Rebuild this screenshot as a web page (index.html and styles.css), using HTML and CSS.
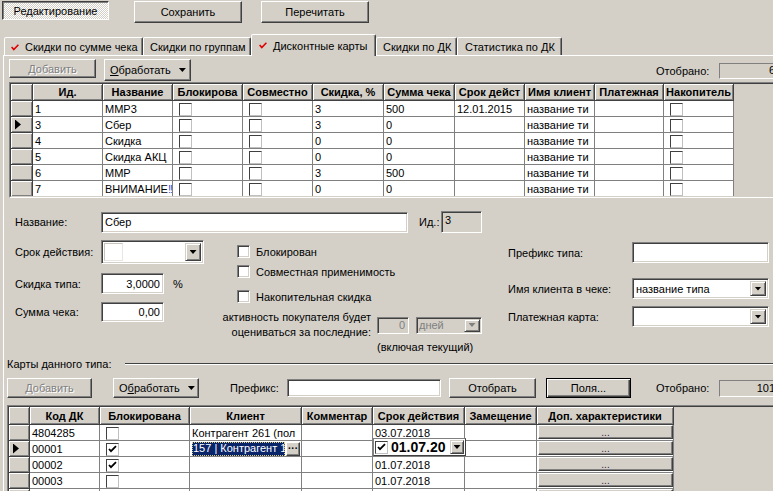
FILE: index.html
```html
<!DOCTYPE html>
<html lang="ru">
<head>
    <meta charset="UTF-8">
    <title>Дисконтные карты</title>
    <link rel="stylesheet" href="styles.css">
</head>
<body>
    <!-- Top command buttons -->
    <div class="topbar">
        <button class="btn btn-pressed btn-edit">Редактирование</button>
        <button class="btn btn-save">Сохранить</button>
        <button class="btn btn-reload">Перечитать</button>
    </div>

    <!-- Tabs -->
    <div class="tabs">
        <div class="tab tab-sum"><svg class="tick" width="8" height="7" viewBox="0 0 8 7"><polyline points="0.6,3 2.8,5.6 7.4,0.8"/></svg>Скидки по сумме чека</div>
        <div class="tab tab-groups">Скидки по группам</div>
        <div class="tab tab-cards active"><svg class="tick" width="8" height="7" viewBox="0 0 8 7"><polyline points="0.6,3 2.8,5.6 7.4,0.8"/></svg>Дисконтные карты</div>
        <div class="tab tab-dk">Скидки по ДК</div>
        <div class="tab tab-stat">Статистика по ДК</div>
    </div>

    <div class="panel">
        <div class="toolbar toolbar-types">
            <button class="btn btn-add" disabled>Добавить</button>
            <button class="btn btn-proc"><span><u>О</u>бработать</span><i class="tri"></i></button>
            <span class="count-lbl">Отобрано:</span>
            <div class="count">6</div>
        </div>

        <!-- Card types grid -->
        <div class="grid grid-types">
            <div class="grid-inner">
                <table>
                    <colgroup>
                        <col class="w22"><col class="w70"><col class="w70"><col class="w70"><col class="w70"><col class="w71"><col class="w71"><col class="w70"><col class="w70"><col class="w69"><col class="w70">
                    </colgroup>
                    <thead>
                        <tr><th></th><th>Ид.</th><th>Название</th><th>Блокирова</th><th>Совместно</th><th>Скидка, %</th><th>Сумма чека</th><th>Срок дейст</th><th>Имя клиент</th><th>Платежная</th><th>Накопитель</th></tr>
                    </thead>
                    <tbody>
                        <tr><td class="ind"></td><td>1</td><td>ММР3</td><td><span class="gcb"></span></td><td><span class="gcb"></span></td><td>3</td><td>500</td><td>12.01.2015</td><td>название ти</td><td></td><td><span class="gcb"></span></td></tr>
                        <tr><td class="ind"><i class="ptr"></i></td><td>3</td><td>Сбер</td><td><span class="gcb"></span></td><td><span class="gcb"></span></td><td>3</td><td>0</td><td></td><td>название ти</td><td></td><td><span class="gcb"></span></td></tr>
                        <tr><td class="ind"></td><td>4</td><td>Скидка</td><td><span class="gcb"></span></td><td><span class="gcb"></span></td><td>0</td><td>0</td><td></td><td>название ти</td><td></td><td><span class="gcb"></span></td></tr>
                        <tr><td class="ind"></td><td>5</td><td>Скидка АКЦ</td><td><span class="gcb"></span></td><td><span class="gcb"></span></td><td>0</td><td>0</td><td></td><td>название ти</td><td></td><td><span class="gcb"></span></td></tr>
                        <tr><td class="ind"></td><td>6</td><td>ММР</td><td><span class="gcb"></span></td><td><span class="gcb"></span></td><td>3</td><td>500</td><td></td><td>название ти</td><td></td><td><span class="gcb"></span></td></tr>
                        <tr><td class="ind"></td><td>7</td><td>ВНИМАНИЕ<span class="bang">!!!</span></td><td><span class="gcb"></span></td><td><span class="gcb"></span></td><td>0</td><td>0</td><td></td><td>название ти</td><td></td><td><span class="gcb"></span></td></tr>
                    </tbody>
                </table>
            </div>
        </div>

        <!-- Type editor -->
        <div class="form">
            <div class="row-name">
                <span class="lbl">Название:</span>
                <input class="inp inp-name" type="text" value="Сбер">
                <span class="lbl-id">Ид.:</span>
                <div class="inp box-id">3</div>
            </div>

            <div class="form-cols">
                <div class="col-left">
                    <div class="f-row">
                        <span class="lbl">Срок действия:</span>
                        <div class="inp combo combo-date">
                            <span class="date-chk"></span>
                            <span class="combo-text"></span>
                            <span class="dd"><i class="tri"></i></span>
                        </div>
                    </div>
                    <div class="f-row f-row-disc">
                        <span class="lbl">Скидка типа:</span>
                        <input class="inp inp-num" type="text" value="3,0000">
                        <span class="pct">%</span>
                    </div>
                    <div class="f-row f-row-sum">
                        <span class="lbl">Сумма чека:</span>
                        <input class="inp inp-num inp-sum" type="text" value="0,00">
                    </div>
                </div>

                <div class="col-mid">
                    <label class="chk"><span class="cb"></span>Блокирован</label>
                    <label class="chk chk-2"><span class="cb"></span>Совместная применимость</label>
                    <label class="chk chk-3"><span class="cb"></span>Накопительная скидка</label>
                    <div class="activity">
                        <span class="act-text">активность покупателя будет<br>оцениваться за последние:</span>
                        <div class="inp box-days">0</div>
                        <div class="inp combo combo-unit">
                            <span class="combo-text">дней</span>
                            <span class="dd"><i class="tri tri-off"></i></span>
                        </div>
                    </div>
                    <div class="act-note">(включая текущий)</div>
                </div>

                <div class="col-right">
                    <div class="f-row r-prefix">
                        <span class="lbl-r">Префикс типа:</span>
                        <input class="inp inp-r" type="text" value="">
                    </div>
                    <div class="f-row r-client">
                        <span class="lbl-r">Имя клиента в чеке:</span>
                        <div class="inp combo combo-r">
                            <span class="combo-text">название типа</span>
                            <span class="dd"><i class="tri"></i></span>
                        </div>
                    </div>
                    <div class="f-row r-pay">
                        <span class="lbl-r">Платежная карта:</span>
                        <div class="inp combo combo-r">
                            <span class="combo-text"></span>
                            <span class="dd"><i class="tri"></i></span>
                        </div>
                    </div>
                </div>
            </div>
        </div>

        <!-- Cards of this type -->
        <div class="section">
            <span>Карты данного типа:</span>
            <span class="section-line"></span>
        </div>

        <div class="toolbar toolbar-cards">
            <button class="btn btn-add2" disabled>Добавить</button>
            <button class="btn btn-proc btn-proc2"><span>О<u>б</u>работать</span><i class="tri"></i></button>
            <span class="pref-lbl">Префикс:</span>
            <input class="inp inp-pref" type="text" value="">
            <button class="btn btn-filter">Отобрать</button>
            <button class="btn btn-default btn-fields">Поля...</button>
            <span class="count-lbl count-lbl2">Отобрано:</span>
            <div class="count count2">101</div>
        </div>

        <div class="grid grid-cards">
            <div class="grid-inner">
                <table>
                    <colgroup>
                        <col class="w21"><col class="w70"><col class="w90"><col class="w112"><col class="w71"><col class="w92"><col class="w72"><col class="w137">
                    </colgroup>
                    <thead>
                        <tr><th></th><th>Код ДК</th><th>Блокирована</th><th>Клиент</th><th>Комментар</th><th>Срок действия</th><th>Замещение</th><th>Доп. характеристики</th></tr>
                    </thead>
                    <tbody>
                        <tr><td class="ind"></td><td>4804285</td><td><span class="gcb"></span></td><td>Контрагент 261 (пол</td><td></td><td>03.07.2018</td><td></td><td class="btn-cell"><div class="cell-btn">...</div></td></tr>
                        <tr><td class="ind"><i class="ptr"></i></td><td>00001</td><td><span class="gcb"><svg width="9" height="9" viewBox="0 0 9 9"><polyline points="1,4 3,6.2 8,1.2"/></svg></span></td>
                            <td class="edit-cell"><div class="edit"><span class="edit-text">157 | Контрагент 1</span><span class="edit-btn">···</span></div></td>
                            <td></td>
                            <td class="date-cell"><div class="date-editor"><span class="cb cb-on"><svg width="9" height="9" viewBox="0 0 9 9"><polyline points="1,4 3,6.2 8,1.2"/></svg></span><span class="date-val">01.07.20</span><span class="dd"><i class="tri"></i></span></div></td>
                            <td></td><td class="btn-cell"><div class="cell-btn">...</div></td></tr>
                        <tr><td class="ind"></td><td>00002</td><td><span class="gcb"><svg width="9" height="9" viewBox="0 0 9 9"><polyline points="1,4 3,6.2 8,1.2"/></svg></span></td><td></td><td></td><td>01.07.2018</td><td></td><td class="btn-cell"><div class="cell-btn">...</div></td></tr>
                        <tr><td class="ind"></td><td>00003</td><td><span class="gcb"></span></td><td></td><td></td><td>01.07.2018</td><td></td><td class="btn-cell"><div class="cell-btn">...</div></td></tr>
                        <tr><td class="ind"></td><td></td><td></td><td></td><td></td><td></td><td></td><td class="btn-cell"><div class="cell-btn"></div></td></tr>
                    </tbody>
                </table>
            </div>
        </div>
    </div>
</body>
</html>
```

FILE: styles.css
```css
:root {
    --face: #d4d0c8;
    --shadow: #808080;
    --dark: #404040;
    --hl: #ffffff;
    --select: #0a246a;
}

* {
    margin: 0;
    padding: 0;
    box-sizing: border-box;
}

body {
    width: 773px;
    height: 491px;
    overflow: hidden;
    background: var(--face);
    font-family: "Liberation Sans", Arial, sans-serif;
    font-size: 11px;
    color: #000;
}

/* Buttons */
.btn {
    display: inline-flex;
    align-items: center;
    justify-content: center;
    flex: none;
    font: inherit;
    color: #000;
    background: var(--face);
    border: 1px solid;
    border-color: var(--hl) var(--dark) var(--dark) var(--hl);
    box-shadow: inset -1px -1px var(--shadow);
    border-radius: 0;
    white-space: nowrap;
}

.btn:disabled {
    color: var(--shadow);
    text-shadow: 1px 1px var(--hl);
}

.btn-pressed {
    border-color: var(--dark) var(--hl) var(--hl) var(--dark);
    box-shadow: inset 1px 1px var(--shadow);
    background: repeating-conic-gradient(#fff 0 25%, var(--face) 0 50%) 0 0 / 2px 2px;
}

.btn-default {
    border-color: #000;
    box-shadow: inset 1px 1px var(--hl), inset -1px -1px var(--dark), inset -2px -2px var(--shadow);
}

.tri {
    display: block;
    width: 7px;
    height: 4px;
    background: #000;
    clip-path: polygon(0 0, 100% 0, 50% 100%);
}

.tri-off {
    background: var(--shadow);
}

/* Top bar */
.topbar {
    display: flex;
    align-items: flex-start;
    height: 34px;
    padding: 1px 0 0 2px;
}

.btn-edit { width: 107px; height: 19px; }
.btn-save { width: 108px; height: 22px; margin-left: 25px; }
.btn-reload { width: 108px; height: 22px; margin-left: 19px; }

/* Tabs */
.tabs {
    position: relative;
    z-index: 1;
    display: flex;
    align-items: flex-end;
    height: 21px;
    padding-left: 4px;
}

.tab {
    display: flex;
    align-items: center;
    height: 18px;
    padding: 1px 0 0 6px;
    background: var(--face);
    border: 1px solid;
    border-bottom: none;
    border-color: var(--hl) var(--dark) transparent var(--hl);
    border-radius: 2px 2px 0 0;
    box-shadow: inset -1px 0 var(--shadow);
    white-space: nowrap;
}

.tab.active {
    height: 22px;
    margin-bottom: -1px;
    padding-top: 0;
}

.tick {
    margin-right: 6px;
    fill: none;
    stroke: #e00000;
    stroke-width: 1.6;
}

.tab-sum { width: 139px; }
.tab-groups { width: 108px; }
.tab-cards { width: 125px; padding-left: 7px; }
.tab-dk { width: 81px; }
.tab-stat { width: 105px; padding-left: 7px; }

.panel {
    height: 436px;
    margin-left: 3px;
    border-top: 1px solid var(--hl);
    border-left: 1px solid var(--hl);
}

/* Toolbars */
.toolbar {
    display: flex;
    align-items: flex-start;
}

.toolbar-types {
    height: 26px;
    padding: 3px 0 0 5px;
}

.btn-add { width: 87px; height: 19px; }

.btn-proc {
    justify-content: flex-start;
    width: 87px;
    height: 22px;
    margin-left: 8px;
    padding-left: 5px;
}

.btn-proc .tri {
    margin-left: 8px;
}

.count-lbl {
    width: 63px;
    margin: 4px 0 0 auto;
    line-height: 16px;
}

.count {
    width: 60px;
    height: 16px;
    margin: 4px -6px 0 0;
    padding-right: 3px;
    text-align: right;
    line-height: 13px;
    border: 1px solid;
    border-color: var(--shadow) var(--hl) var(--hl) var(--shadow);
}

/* Grids */
.grid {
    margin-right: -10px;
    border: 1px solid;
    border-color: var(--shadow) var(--hl) var(--hl) var(--shadow);
}

.grid-inner {
    height: 100%;
    overflow: hidden;
    background: var(--face);
    border: 1px solid;
    border-color: var(--dark) var(--face) var(--face) var(--dark);
}

.grid table {
    border-collapse: separate;
    border-spacing: 0;
    table-layout: fixed;
    font-family: "Liberation Sans", Arial, sans-serif;
}

.grid th {
    height: 17px;
    padding: 0 2px;
    font-weight: bold;
    text-align: center;
    white-space: nowrap;
    overflow: hidden;
    background: var(--face);
    border-right: 1px solid var(--dark);
    border-bottom: 1px solid var(--dark);
    box-shadow: inset 1px 1px var(--hl), inset -1px -1px var(--shadow);
}

.grid td {
    height: 16px;
    padding: 1px 2px 0;
    white-space: nowrap;
    overflow: hidden;
    background: #fff;
    border-right: 1px solid var(--shadow);
    border-bottom: 1px solid var(--shadow);
}

.grid td.ind {
    padding: 0 0 0 4px;
    background: var(--face);
    border-right-color: var(--dark);
    border-bottom-color: var(--dark);
    box-shadow: inset 1px 1px var(--hl), inset -1px -1px var(--shadow);
}

.ptr {
    display: block;
    width: 6px;
    height: 10px;
    background: #000;
    clip-path: polygon(0 0, 100% 50%, 0 100%);
}

.gcb {
    display: block;
    width: 13px;
    height: 13px;
    margin-left: 4px;
    background: #fff;
    border: 1px solid;
    border-color: var(--dark) #c0c0c0 #c0c0c0 var(--dark);
    line-height: 0;
}

.gcb svg,
.cb svg {
    margin: 1px 0 0 1px;
    fill: none;
    stroke: #000;
    stroke-width: 1.8;
}

.bang {
    color: #3050c8;
    letter-spacing: -1px;
}

.w21 { width: 21px; }
.w22 { width: 22px; }
.w69 { width: 69px; }
.w70 { width: 70px; }
.w71 { width: 71px; }
.w72 { width: 72px; }
.w90 { width: 90px; }
.w92 { width: 92px; }
.w112 { width: 112px; }
.w137 { width: 137px; }

.grid-types {
    height: 116px;
    margin-left: 5px;
}

.grid-types table { width: 723px; }

/* Form controls */
.inp {
    display: block;
    flex: none;
    font: inherit;
    color: #000;
    background: #fff;
    border: 1px solid;
    border-color: var(--shadow) var(--hl) var(--hl) var(--shadow);
    box-shadow: inset 1px 1px var(--dark), inset -1px -1px var(--face);
    padding: 0 3px;
    outline: none;
}

.combo {
    display: flex;
    align-items: stretch;
    padding: 2px;
}

.combo-text {
    flex: 1;
    display: flex;
    align-items: center;
    padding-left: 1px;
    white-space: nowrap;
    overflow: hidden;
}

.dd {
    display: flex;
    align-items: center;
    justify-content: center;
    width: 16px;
    flex: none;
    background: var(--face);
    border: 1px solid;
    border-color: var(--face) var(--dark) var(--dark) var(--face);
    box-shadow: inset 1px 1px var(--hl), inset -1px -1px var(--shadow);
}

.cb {
    display: block;
    flex: none;
    width: 13px;
    height: 13px;
    background: #fff;
    border: 1px solid;
    border-color: var(--shadow) var(--hl) var(--hl) var(--shadow);
    box-shadow: inset 1px 1px var(--dark), inset -1px -1px var(--face);
    line-height: 0;
}

/* Type form */
.form {
    padding: 13px 0 0 11px;
}

.row-name {
    display: flex;
    align-items: center;
    height: 22px;
}

.lbl {
    width: 86px;
    flex: none;
}

.inp-name {
    width: 307px;
    height: 21px;
}

.lbl-id {
    width: 22px;
    margin-left: 11px;
}

.box-id {
    width: 41px;
    height: 22px;
    line-height: 17px;
    padding-left: 3px;
    background: var(--face);
}

.form-cols {
    display: flex;
    height: 117px;
    margin-top: 7px;
}

.f-row {
    display: flex;
    align-items: center;
}

.col-left {
    width: 222px;
    flex: none;
}

.combo-date {
    width: 103px;
    height: 24px;
}

.date-chk {
    width: 19px;
    flex: none;
    background: #fff;
    border: 1px solid #c8c4bc;
    border-right-color: #e8e6e2;
    border-bottom-color: #e8e6e2;
}

.f-row-disc { margin-top: 9px; }
.f-row-sum { margin-top: 8px; }

.inp-num {
    width: 63px;
    height: 21px;
    text-align: right;
    padding-right: 3px;
}

.inp-sum { height: 20px; }

.pct {
    margin-left: 9px;
}

.col-mid {
    width: 271px;
    flex: none;
    padding-top: 5px;
}

.chk {
    display: flex;
    align-items: center;
    height: 13px;
    white-space: nowrap;
}

.chk .cb {
    margin-right: 6px;
}

.chk-2 { margin-top: 7px; }
.chk-3 { margin-top: 12px; }

.activity {
    display: flex;
    align-items: center;
    margin-top: 7px;
}

.act-text {
    width: 160px;
    margin-left: -26px;
    text-align: right;
    line-height: 15px;
    white-space: nowrap;
}

.box-days {
    width: 32px;
    height: 17px;
    margin-left: 6px;
    text-align: right;
    line-height: 14px;
    color: var(--shadow);
    background: var(--face);
}

.combo-unit {
    width: 66px;
    height: 17px;
    margin-left: 7px;
    padding: 1px;
    color: var(--shadow);
    background: var(--face);
}

.act-note {
    margin-left: 140px;
    line-height: 14px;
}

.col-right {
    width: 261px;
    flex: none;
    padding-top: 2px;
}

.lbl-r {
    width: 124px;
    flex: none;
}

.inp-r,
.combo-r {
    width: 137px;
    height: 21px;
}

.r-client { margin-top: 15px; }
.r-pay { margin-top: 7px; }

/* Cards section */
.section {
    display: flex;
    align-items: center;
    height: 13px;
    padding-left: 3px;
}

.section-line {
    flex: 1;
    height: 2px;
    margin-left: 14px;
    border-top: 1px solid var(--dark);
    border-bottom: 1px solid var(--hl);
}

.toolbar-cards {
    align-items: center;
    height: 20px;
    margin-top: 8px;
    padding-left: 3px;
}

.btn-add2 { width: 85px; height: 20px; }

.btn-proc2 {
    width: 86px;
    height: 20px;
    margin-left: 21px;
}

.pref-lbl {
    width: 57px;
    margin-left: 31px;
}

.inp-pref {
    width: 154px;
    height: 18px;
}

.btn-filter { width: 87px; height: 20px; margin-left: 8px; }
.btn-fields { width: 85px; height: 20px; margin-left: 10px; }

.count-lbl2 {
    margin: 0 0 0 25px;
}

.count2 {
    height: 17px;
    margin-top: 0;
    line-height: 14px;
}

.grid-cards {
    height: 100px;
    margin: 7px -10px 0 3px;
}

.grid-cards table { width: 665px; }

.grid-cards th { height: 18px; }

.btn-cell {
    padding: 0 0 0 1px !important;
    vertical-align: top;
}

.cell-btn {
    display: flex;
    align-items: flex-end;
    justify-content: center;
    height: 14px;
    font-size: 10px;
    line-height: 10px;
    color: #302048;
    background: var(--face);
    border: 1px solid;
    border-color: var(--hl) var(--dark) var(--dark) var(--hl);
    box-shadow: inset -1px -1px var(--shadow);
}

.edit-cell {
    padding: 0 1px 0 2px !important;
}

.edit {
    display: flex;
    height: 14px;
}

.edit-text {
    flex: 1;
    padding-left: 1px;
    line-height: 13px;
    color: #fff;
    background: var(--select);
    outline: 1px dotted #e0d080;
    outline-offset: -1px;
    white-space: nowrap;
    overflow: hidden;
}

.edit-btn {
    display: flex;
    align-items: center;
    justify-content: center;
    width: 14px;
    margin-left: 1px;
    font-weight: bold;
    font-size: 10px;
    background: var(--face);
    border: 1px solid;
    border-color: var(--hl) var(--dark) var(--dark) var(--hl);
    box-shadow: inset -1px -1px var(--shadow);
}

.grid td.date-cell {
    position: relative;
    overflow: visible;
}

.date-editor {
    position: absolute;
    top: -3px;
    left: 0;
    z-index: 2;
    display: flex;
    align-items: stretch;
    width: 93px;
    height: 18px;
    padding: 1px;
    background: #fff;
    border: 1px solid;
    border-color: var(--shadow) var(--dark) var(--dark) var(--shadow);
}

.date-editor .cb {
    margin-top: 1px;
    box-shadow: none;
    border-color: var(--dark) #c0c0c0 #c0c0c0 var(--dark);
}

.date-val {
    flex: 1;
    margin-left: 3px;
    font-size: 14px;
    font-weight: bold;
    line-height: 14px;
    overflow: hidden;
    white-space: nowrap;
}

.date-editor .dd {
    width: 14px;
}
```
